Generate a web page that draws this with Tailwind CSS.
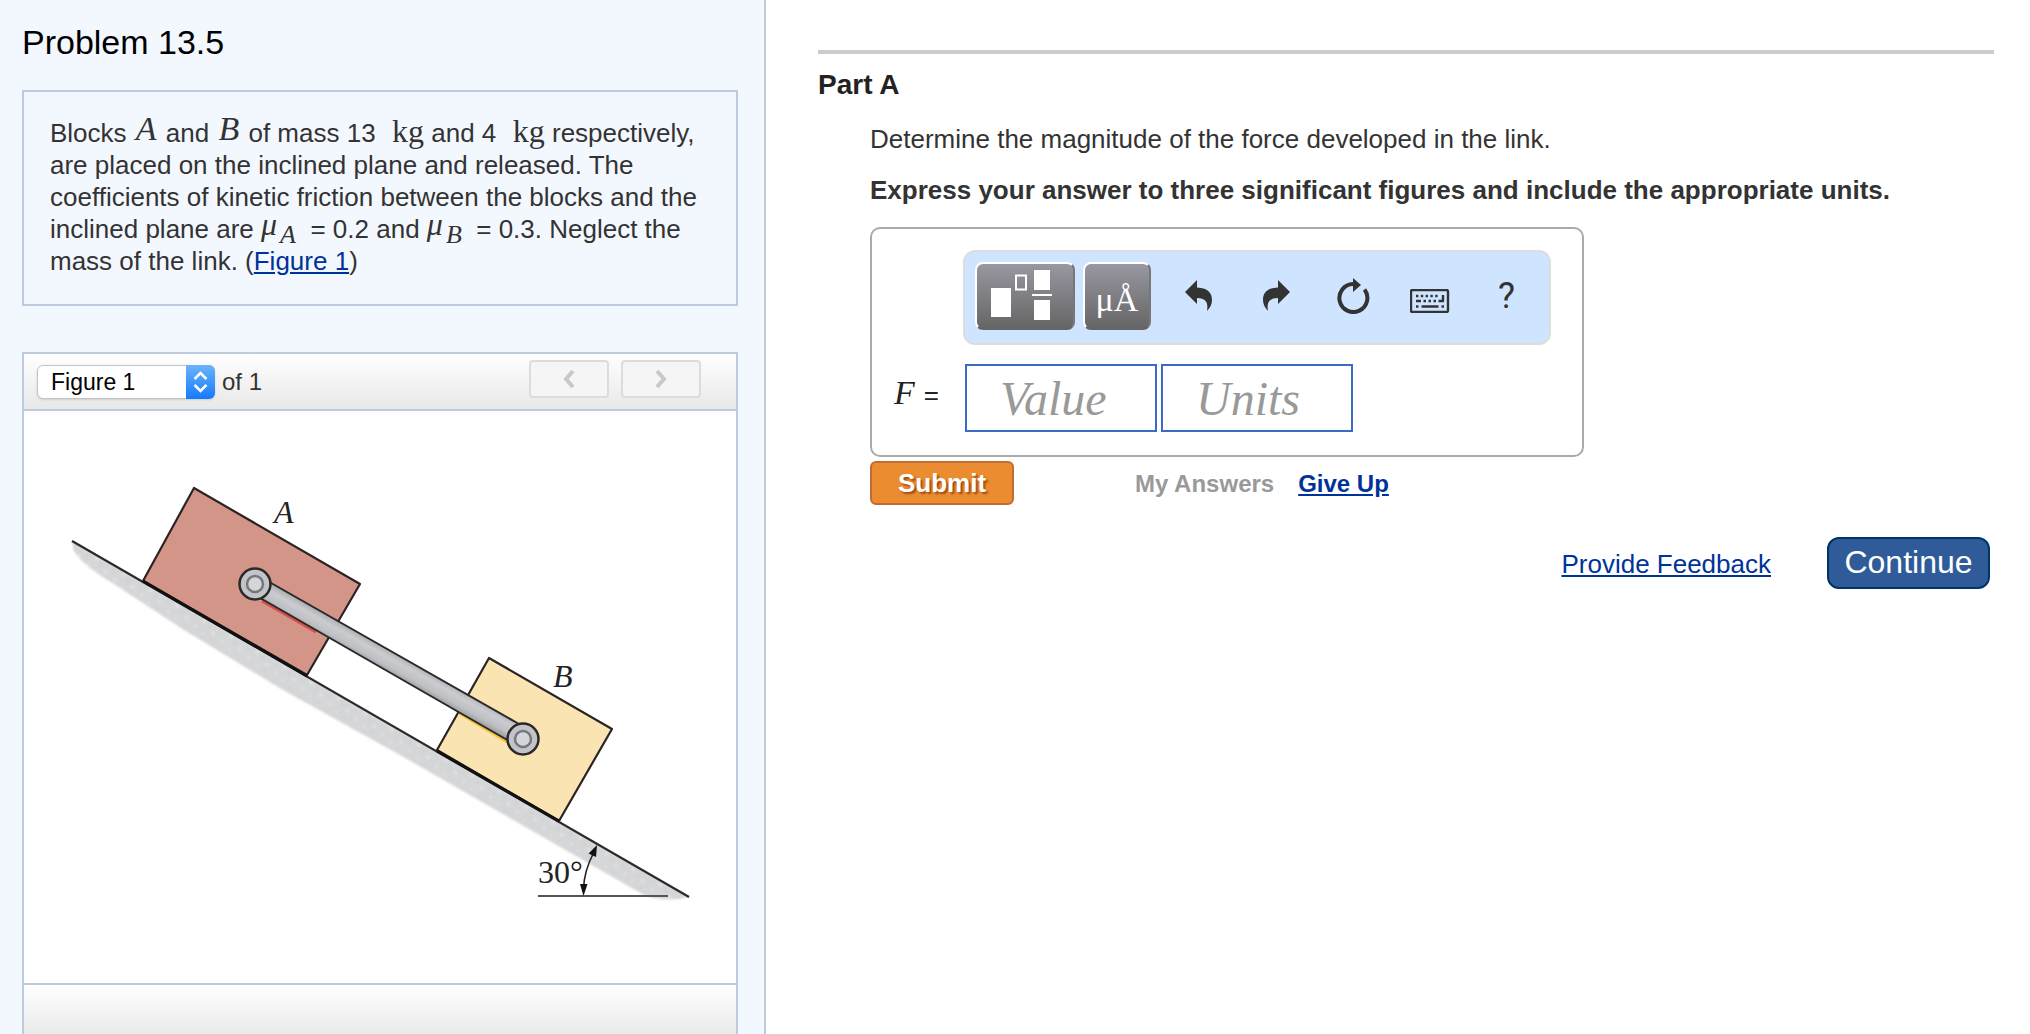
<!DOCTYPE html>
<html lang="en">
<head>
<meta charset="utf-8">
<meta name="viewport" content="width=device-width, initial-scale=1">
<title>Problem 13.5</title>
<script src="https://cdn.jsdelivr.net/npm/@tailwindcss/browser@4"></script>
</head>
<body class="bg-white font-['Liberation_Sans',Arial,sans-serif] text-[26px] leading-8 text-[#333]">
<div class="grid min-h-screen grid-cols-[383fr_632fr]">

  <!-- Problem statement and figure -->
  <aside class="flex flex-col border-r-2 border-[#bccbdd] bg-[#f3f8ff] pl-[22px] pr-[26px] pt-[22px]">
    <h1 class="text-[34px] leading-10 text-black">Problem 13.5</h1>

    <section class="mt-7 border-2 border-[#bccbdd] px-[26px] pb-[27px] pt-[25px]">
      <p>Blocks <i class="mx-[2px] align-[2px] font-['Liberation_Serif',serif] text-[34px] leading-0">A</i> and <i class="mx-[2px] align-[2px] font-['Liberation_Serif',serif] text-[34px] leading-0">B</i> of mass 13 &nbsp;<span class="ml-[2px] font-['Liberation_Serif',serif] text-[32px] leading-0">kg</span> and 4 &nbsp;<span class="ml-[2px] font-['Liberation_Serif',serif] text-[32px] leading-0">kg</span> respectively, are placed on the inclined plane and released. The coefficients of kinetic friction between the blocks and the inclined plane are <i class="mr-[3px] align-[3px] font-['Liberation_Serif',serif] text-[32px] leading-0">μ</i><i class="align-[-5px] font-['Liberation_Serif',serif] text-[26px] leading-0">A</i> &nbsp;= 0.2 and <i class="mr-[3px] align-[3px] font-['Liberation_Serif',serif] text-[32px] leading-0">μ</i><i class="align-[-5px] font-['Liberation_Serif',serif] text-[26px] leading-0">B</i> &nbsp;= 0.3. Neglect the mass of the link. (<a href="#figure" class="text-[#039] underline">Figure 1</a>)</p>
    </section>

    <section id="figure" class="mt-[46px] flex grow flex-col border-x-2 border-t-2 border-[#bccbdd] bg-white">
      <div class="flex h-[57px] items-center border-b-2 border-[#bccbdd] bg-linear-to-b from-white to-[#e8e8e8] pl-[13px] pr-[35px]">
        <div class="relative">
          <select id="fig" class="block h-[34px] w-[178px] appearance-none rounded-md border border-[#c4c4c4] bg-white pl-[13px] text-[23px] leading-7 text-black shadow-sm"><option>Figure 1</option></select>
          <svg class="pointer-events-none absolute right-0 top-0 h-[34px] w-[29px]" viewBox="0 0 29 34" fill="none"><defs><linearGradient id="cap" x2="0" y2="1"><stop stop-color="#6cb3fa"/><stop offset="1" stop-color="#147afe"/></linearGradient></defs><path d="M0 0h23a6 6 0 0 1 6 6v22a6 6 0 0 1-6 6H0z" fill="url(#cap)"/><path d="M8.500 14 14.500 8l6 6M8.500 20l6 6 6-6" stroke="#fff" stroke-width="2.600"/></svg>
        </div>
        <label for="fig" class="ml-[7px] text-[24px]">of 1</label>
        <div class="ml-auto flex -translate-y-[3px] gap-3">
          <button aria-label="Previous figure" class="flex h-[38px] w-20 items-center justify-center rounded border-2 border-[#dcdcdc] bg-[#f5f5f5]"><svg class="h-5 w-5" viewBox="0 0 20 20" fill="none" stroke="#c8c8c8" stroke-width="4"><path d="M14 2 7 10l7 8"/></svg></button>
          <button aria-label="Next figure" class="flex h-[38px] w-20 items-center justify-center rounded border-2 border-[#dcdcdc] bg-[#f5f5f5]"><svg class="h-5 w-5" viewBox="0 0 20 20" fill="none" stroke="#c8c8c8" stroke-width="4"><path d="m6 2 7 8-7 8"/></svg></button>
        </div>
      </div>

      <svg class="block h-auto w-full" viewBox="0 0 712 572" role="img" aria-label="Blocks A and B joined by a link on a 30 degree incline">
        <defs>
          <pattern id="grit" width="31" height="27" patternUnits="userSpaceOnUse" patternTransform="rotate(30)">
            <rect width="31" height="27" fill="#d5d6d8"/>
            <g fill="#e9eaeb"><circle cx="4" cy="5" r="1.300"/><circle cx="13" cy="11" r="1.500"/><circle cx="24" cy="4" r="1"/><circle cx="27" cy="17" r="1.400"/><circle cx="8" cy="20" r="1.200"/><circle cx="18" cy="23" r="1"/></g>
            <g fill="#c9cacc"><circle cx="9" cy="2" r="1"/><circle cx="20" cy="14" r="1.200"/><circle cx="3" cy="13" r="1"/><circle cx="28" cy="24" r="1"/></g>
          </pattern>
          <linearGradient id="bar" gradientUnits="userSpaceOnUse" x1="370" y1="242" x2="360" y2="260"><stop stop-color="#b0b1b5"/><stop offset=".3" stop-color="#cbccd0"/><stop offset=".7" stop-color="#bfc0c4"/><stop offset="1" stop-color="#9b9ca1"/></linearGradient>
          <filter id="soft"><feGaussianBlur stdDeviation="1"/></filter>
        </defs>
        <path d="M48 130 665 486Q640 492 620 484L376 344 259 279 160 219 90 173Q58 154 50 140Z" fill="url(#grit)" filter="url(#soft)"/>
        <path d="M48 130 665 486" stroke="#2b2829" stroke-width="2.200"/>
        <g stroke="#2b2324" stroke-width="2.200" stroke-linejoin="round">
          <path d="M170 77 336 173 283 264 119 170Z" fill="#d39587"/>
          <path d="M465 247 588 318 535 410 413 339Z" fill="#fae4b1"/>
        </g>
        <path d="m119 170 164 95M413 340l122 70" stroke="#111" stroke-width="3"/>
        <path d="m238 190 54 31" stroke="#d8504a" stroke-width="3"/>
        <path d="m435 302 50 30" stroke="#f5c33b" stroke-width="3"/>
        <path d="M240 168 495 313 485 330 231 184Z" fill="url(#bar)" stroke="#2b2829" stroke-width="2"/>
        <g stroke="#2b2829" stroke-width="2.500" fill="#c3c4c8"><circle cx="231" cy="173" r="15.500"/><circle cx="499" cy="328" r="15.500"/></g>
        <g stroke="#77787d" stroke-width="2.500" fill="#d5d6d9"><circle cx="231" cy="173" r="8"/><circle cx="499" cy="328" r="8"/></g>
        <path d="M514 485H644" stroke="#555" stroke-width="1.800"/>
        <path d="M570 441Q560 460 559.500 478" fill="none" stroke="#222" stroke-width="1.600"/>
        <path d="m573 434-8.500 8.500 7.500 3.500ZM559.500 485l-3.500-12h7.500Z" fill="#111"/>
        <g fill="#222" class="font-['Liberation_Serif',serif] text-[32px]"><text x="250" y="112" font-style="italic">A</text><text x="529" y="276" font-style="italic">B</text><text x="514" y="472">30°</text></g>
      </svg>

      <div class="min-h-[49px] grow border-t-2 border-[#bccbdd] bg-linear-to-b from-white to-[#eaeaea]"></div>
    </section>
  </aside>

  <!-- Question part -->
  <main class="pl-[52px] pr-9 pt-[50px]">
    <div class="h-1 bg-[#ccc]"></div>
    <h2 class="mt-[15px] text-[28px] font-bold leading-8 text-[#222]">Part A</h2>
    <div class="pl-[52px]">
      <p class="mt-[22px]">Determine the magnitude of the force developed in the link.</p>
      <p class="mt-[19px] font-bold">Express your answer to three significant figures and include the appropriate units.</p>

      <div class="mt-[21px] max-w-[714px] rounded-[10px] border-2 border-[#aaa] pb-[23px] pr-[31px] pt-[21px]">
        <div class="ml-[91px] flex h-[95px] items-center rounded-xl border-2 border-[#ddd] bg-[#cfe5ff] pb-1 pl-[10px] pr-1">
          <button aria-label="Templates" class="h-[68px] w-[100px] shrink-0 rounded-lg border-2 border-b-[#666] border-l-white border-r-[#777] border-t-white bg-linear-to-b from-[#9997a1] to-[#666]">
            <svg class="h-full w-full" viewBox="0 0 96 64" fill="#fff"><path d="M14 24h20v29H14zM57 6h16v20H57zM57 36h16v20H57zM55 30h20v2H55z"/><path d="M39 11.500h10v14H39z" fill="none" stroke="#fff" stroke-width="2"/></svg>
          </button>
          <button class="ml-2 flex h-[68px] w-[68px] shrink-0 items-center justify-center rounded-lg border-2 border-b-[#666] border-l-white border-r-[#777] border-t-white bg-linear-to-b from-[#9997a1] to-[#666] pt-2 font-['Liberation_Serif',serif] text-[34px] text-white">μÅ</button>
          <div class="ml-[10px] grid grow grid-cols-5 items-center text-[#333]">
            <button aria-label="Undo" class="flex justify-center"><svg class="h-9 w-9" viewBox="0 0 36 36" fill="currentColor"><path d="M4 14 16 2v7.500C28 10 31 16 31 22c0 4-2 8-5 11 1.500-8-1-13-10-13v6Z"/></svg></button>
            <button aria-label="Redo" class="flex justify-center"><svg class="h-9 w-9" viewBox="0 0 36 36" fill="currentColor"><path d="M32 14 20 2v7.500C8 10 5 16 5 22c0 4 2 8 5 11-1.500-8 1-13 10-13v6Z"/></svg></button>
            <button aria-label="Reset" class="flex justify-center"><svg class="h-9 w-9" viewBox="0 0 36 36"><path d="M29.500 11.500A14 14 0 1 1 18 6" fill="none" stroke="currentColor" stroke-width="4"/><path d="m18 0 8 7-8 7Z" fill="currentColor"/></svg></button>
            <button aria-label="Keyboard" class="flex justify-center pt-[10px]"><svg class="h-6 w-10" viewBox="0 0 40 24" fill="none" stroke="currentColor"><rect x="1" y="1" width="37" height="22" rx="1.500" stroke-width="2.400"/><path d="M6 7h24" stroke-width="2.400" stroke-dasharray="2.400 2.400"/><path d="M6 12h5M13.500 12h2.500M18.500 12h2.500M23.500 12h2.500M28.500 12H34M6 17.500h2.500M11.500 17.500h17M31.500 17.500H34" stroke-width="2.400"/><path d="M33 6v6" stroke-width="2.400"/></svg></button>
            <button aria-label="Help" class="flex justify-center font-['Roboto',sans-serif] text-[36px] leading-9">?</button>
          </div>
        </div>

        <div class="mt-[19px] flex items-center pl-[22px]">
          <label for="val" class="flex w-[71px] shrink-0 items-baseline gap-[9px] whitespace-nowrap pb-2 text-[26px] text-[#222]"><i class="font-['Liberation_Serif',serif] text-[34px] leading-8">F</i><span>=</span></label>
          <input id="val" type="text" placeholder="Value" class="h-[68px] w-48 border-2 border-[#3a6bc9] bg-white pl-[33px] font-['Liberation_Serif',serif] text-[48px] italic text-[#333] placeholder:text-[#999]">
          <input type="text" aria-label="Units" placeholder="Units" class="ml-1 h-[68px] w-48 border-2 border-[#3a6bc9] bg-white pl-[33px] font-['Liberation_Serif',serif] text-[48px] italic text-[#333] placeholder:text-[#999]">
        </div>
      </div>

      <div class="mt-1 flex items-center text-[24px] font-bold">
        <button class="h-11 w-36 rounded-md border-2 border-[#c06c35] bg-[#eb8c30] text-[26px] leading-8 text-white text-shadow-[2px_2px_2px_#a04a10]">Submit</button>
        <span class="ml-[121px] pt-[2px] text-[#999]">My Answers</span>
        <a href="#" class="ml-6 pt-[2px] text-[#039] underline">Give Up</a>
      </div>
    </div>

    <div class="mt-8 flex items-center justify-end gap-14 pr-1">
      <a href="#" class="pt-[2px] text-[#039] underline">Provide Feedback</a>
      <button class="h-[52px] w-[163px] rounded-xl border-2 border-[#036] bg-[#2f5c99] pb-[2px] text-[32px] leading-10 text-white">Continue</button>
    </div>
  </main>
</div>
</body>
</html>
